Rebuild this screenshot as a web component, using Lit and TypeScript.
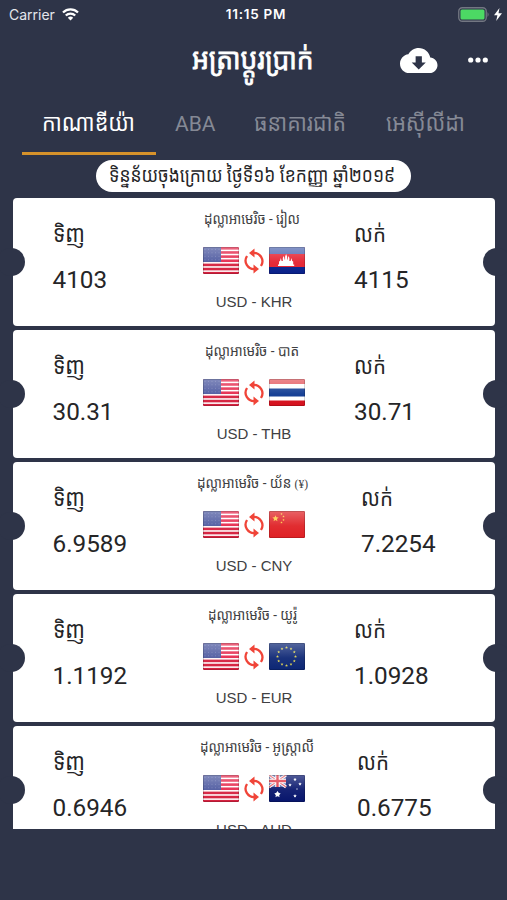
import { LitElement, html, svg, css } from "lit";
import { customElement, property } from "lit/decorators.js";

interface Rate {
  title: string;
  tail?: string;
  titleWidth: number;
  shift: number;
  code: string;
  buy: string;
  sell: string;
  sellX: number;
}

const RATES: Rate[] = [
  { title: "ដុល្លាអាមេរិច - រៀល", titleWidth: 96, shift: -2, code: "KHR", buy: "4103", sell: "4115", sellX: 341 },
  { title: "ដុល្លាអាមេរិច - បាត", titleWidth: 94, shift: -2, code: "THB", buy: "30.31", sell: "30.71", sellX: 341 },
  { title: "ដុល្លាអាមេរិច - យ័ន ", tail: "(¥)", titleWidth: 111, shift: -2, code: "CNY", buy: "6.9589", sell: "7.2254", sellX: 348 },
  { title: "ដុល្លាអាមេរិច - យូរ៉ូ", titleWidth: 89, shift: -2, code: "EUR", buy: "1.1192", sell: "1.0928", sellX: 341 },
  { title: "ដុល្លាអាមេរិច - អូស្ត្រាលី", titleWidth: 114, shift: 3, code: "AUD", buy: "0.6946", sell: "0.6775", sellX: 344 },
];

/** One line of text set to an exact measure. */
@customElement("fit-text")
class FitText extends LitElement {
  @property() text = "";
  @property() tail = "";
  @property({ type: Number }) width = 100;
  @property({ type: Number }) size = 16;
  static styles = css`
    :host { display: block; flex: none; }
    svg { display: block; overflow: visible; }
    text { fill: currentColor; stroke: currentColor; stroke-width: var(--heft, 0); font-family: Roboto, "Khmer OS", "Noto Sans Khmer", "DejaVu Sans", sans-serif; white-space: pre; }
    .tail { font-family: "Liberation Serif", serif; font-size: .85em; }
  `;
  render() {
    return html`<svg width=${this.width} height=${this.size}>
      <text x="0" y=${this.size * 0.8} font-size=${this.size} textLength=${this.width} lengthAdjust="spacingAndGlyphs">${this.tail ? svg`<tspan>${this.text}</tspan><tspan class="tail">${this.tail}</tspan>` : this.text}</text>
    </svg>`;
  }
}

const star = (x: number, y: number, r: number) => {
  const pts = Array.from({ length: 10 }, (_, i) => {
    const q = i % 2 ? r * 0.45 : r;
    const a = (i * Math.PI) / 5 - Math.PI / 2;
    return `${(x + q * Math.cos(a)).toFixed(2)},${(y + q * Math.sin(a)).toFixed(2)}`;
  });
  return svg`<polygon points=${pts.join(" ")} />`;
};

@customElement("country-flag")
class CountryFlag extends LitElement {
  @property() code = "USD";
  static styles = css`
    :host { display: block; width: 36px; height: 27px; }
    svg { display: block; }
  `;
  art() {
    switch (this.code) {
      case "KHR":
        return svg`<rect width="36" height="27" fill="#e5202e"/><rect width="36" height="7" fill="#5168b0"/><rect y="20" width="36" height="7" fill="#08208a"/>
          <path fill="#fff" d="M9 19v-1.5h1v-3l1-.5 .8-3 .8 3h1.2v-3l.8-2 .8 2v1.5h.7v-3l1-2.500 1 2.500v3h.7V11l.8-2 .8 2v3h1.200l.8-3 .8 3 1 .5v3h1V19z"/>`;
      case "THB":
        return svg`<rect width="36" height="27" fill="#fff"/><rect width="36" height="5" fill="#e4555c"/><rect y="9.5" width="36" height="8" fill="#0b3790"/><rect y="21.5" width="36" height="5.5" fill="#d5101d"/>`;
      case "CNY":
        return svg`<rect width="36" height="27" fill="#df2024"/><g fill="#ffc93d">${star(6.5, 7.5, 3.3)}${star(12.5, 3, 1.2)}${star(14.5, 5.5, 1.2)}${star(14.5, 9, 1.2)}${star(12.5, 11.5, 1.2)}</g>`;
      case "EUR":
        return svg`<rect width="36" height="27" fill="#0c2674"/><g fill="#d9cf52">${Array.from({ length: 12 }, (_, i) =>
          star(17.5 + 9 * Math.sin((i * Math.PI) / 6), 13.5 - 9 * Math.cos((i * Math.PI) / 6), 1.5))}</g>`;
      case "AUD":
        return svg`<rect width="36" height="27" fill="#07156c"/><rect width="17" height="12" fill="#596bab"/>
          <path d="M0 0 17 12M17 0 0 12" stroke="#fff" stroke-width="3"/><path d="M0 0 17 12M17 0 0 12" stroke="#e35c68" stroke-width="1.2"/>
          <path d="M8.5 0v12M0 6h17" stroke="#fff" stroke-width="4.5"/><path d="M8.5 0v12M0 6h17" stroke="#df3545" stroke-width="2.4"/>
          <g fill="#fff"><circle cx="8.5" cy="19.3" r="2"/>${star(8.5, 19.3, 3.5)}${star(26, 4.5, 1.8)}${star(21, 10, 1.8)}${star(31, 9, 1.8)}${star(28, 14, 1)}${star(26, 21, 1.9)}</g>`;
      default:
        return svg`<rect width="36" height="27" fill="#fff"/>
          ${[0, 1, 2, 3, 4, 5, 6].map((i) => svg`<rect y=${i * 4.15} width="36" height="2.6" fill=${i < 4 ? "#e5274b" : "#d5213f"}/>`)}
          <rect width="18" height="15" fill="#4c589f"/>
          <g fill="#7882ba">${Array.from({ length: 20 }, (_, i) => svg`<circle cx=${2 + (i % 5) * 3.5} cy=${2.3 + Math.floor(i / 5) * 3.5} r=".5"/>`)}</g>`;
    }
  }
  render() {
    return html`<svg width="36" height="27" viewBox="0 0 36 27">
      <defs>
        <clipPath id="c"><rect width="36" height="27" rx="1"/></clipPath>
        <linearGradient id="g" x2="0" y2="1"><stop stop-color="#fff" stop-opacity=".3"/><stop offset=".55" stop-color="#fff" stop-opacity=".06"/><stop offset="1" stop-color="#fff" stop-opacity="0"/></linearGradient>
      </defs>
      <g clip-path="url(#c)">${this.art()}<rect width="36" height="27" fill="url(#g)"/></g>
      <rect x=".5" y=".5" width="35" height="26" rx="1" fill="none" stroke="#000" stroke-opacity=".16"/>
    </svg>`;
  }
}

@customElement("rate-card")
class RateCard extends LitElement {
  @property({ attribute: false }) rate!: Rate;
  static styles = css`
    :host {
      display: grid; grid-template-columns: 160px 162px 1fr; height: 127.5px; flex: none; position: relative;
      background: #fff; border-radius: 4px; color: #252527; font-family: Roboto, sans-serif;
    }
    .notch { position: absolute; top: 49.5px; width: 28px; height: 28px; border-radius: 50%; background: #2e3448; }
    .l { left: -16px; }
    .r { right: -16px; }
    .side { display: flex; flex-direction: column; padding-top: 25px; gap: 17px; }
    .buy { padding-left: 39.5px; }
    .num { font-size: 24.3px; line-height: 32px; white-space: nowrap; }
    .mid { display: flex; flex-direction: column; align-items: center; padding-top: 13.5px; color: #404042; }
    .flags { display: flex; align-items: center; gap: 5px; margin-top: 20.5px; height: 27px; }
    .pair { font-family: "Liberation Sans", sans-serif; font-size: 15px; line-height: 20px; margin-top: 18px; white-space: nowrap; }
    .swap { display: block; }
  `;
  render() {
    const r = this.rate;
    return html`
      <div class="side buy"><fit-text text="ទិញ" .width=${32} .size=${24}></fit-text><div class="num">${r.buy}</div></div>
      <div class="mid">
        <fit-text style="margin-left:${r.shift * 2}px" .text=${r.title} .tail=${r.tail ?? ""} .width=${r.titleWidth} .size=${15}></fit-text>
        <div class="flags">
          <country-flag code="USD"></country-flag>
          <svg class="swap" width="20" height="26" viewBox="0 0 20 26" fill="none" stroke="#f04438" stroke-width="2.3">
            <path d="M10 4.800C16 5 21 11.500 17 18M10 21.200C4 21-1 14.500 3 8"/>
            <path d="M10.500 .5v9L5 5zM9.500 16.500v9l5.500-4.500z" fill="#f04438" stroke="none"/>
          </svg>
          <country-flag .code=${r.code}></country-flag>
        </div>
        <div class="pair">USD - ${r.code}</div>
      </div>
      <div class="side" style="padding-left:${r.sellX - 322}px"><fit-text text="លក់" .width=${32} .size=${24}></fit-text><div class="num">${r.sell}</div></div>
      <i class="notch l"></i><i class="notch r"></i>`;
  }
}

@customElement("app-root")
class AppRoot extends LitElement {
  static styles = css`
    :host { display: flex; flex-direction: column; width: 507px; height: 900px; overflow: hidden; background: #2e3448; color: #fff; font-family: Roboto, sans-serif; }
    .status { display: grid; grid-template-columns: 1fr auto 1fr; align-items: center; height: 28px; padding: 0 5px 0 9px; box-sizing: border-box; font-family: Inter, sans-serif; font-size: 14px; }
    .carrier { display: flex; align-items: center; gap: 7px; color: #e4e6ec; }
    .time { font-weight: 600; font-size: 13.5px; letter-spacing: .75px; padding-left: 1px; }
    .power { display: flex; justify-content: flex-end; align-items: center; gap: 4px; }
    .head { display: flex; align-items: center; height: 64px; padding-left: 192px; }
    .title { --heft: .8px; }
    .cloud { margin-left: 86.5px; }
    .dots { margin-left: 30px; }
    .tabs { display: flex; height: 63px; padding-left: 22px; color: #858995; }
    .tab { display: flex; align-items: center; box-sizing: border-box; height: 63px; padding-top: 3px; border-bottom: 3px solid transparent; }
    .tab.on { width: 134px; justify-content: center; color: #fff; border-bottom-color: #d6922b; padding-right: 1px; }
    .tab.aba { font-size: 21px; margin-left: 19px; width: 79px; padding-top: 3px; }
    .intl { width: 132px; }
    .note { align-self: center; display: flex; align-items: center; justify-content: center; width: 315px; height: 32px; box-sizing: border-box; padding: 1px 3px 0 0; margin: 4.5px 0 6.5px; border-radius: 16px; background: #fff; color: #252527; flex: none; }
    .list { display: flex; flex-direction: column; gap: 4.5px; height: 631px; overflow: hidden; padding: 0 12px 0 13px; flex: none; }
  `;
  render() {
    return html`
      <div class="status">
        <div class="carrier"><span>Carrier</span>
          <svg width="17" height="13" viewBox="0 0 17 13" fill="none" stroke="#fff" stroke-width="2.3"><path d="M1 4.500a10.800 10.800 0 0 1 15 0M3.800 7.500a6.700 6.700 0 0 1 9.400 0"/><path d="M5.800 9.700a3.900 3.900 0 0 1 5.400 0L8.500 12.600z" fill="#fff" stroke="none"/></svg>
        </div>
        <div class="time">11:15 PM</div>
        <div class="power">
          <svg width="32" height="15" viewBox="0 0 32 15"><rect x=".75" y=".75" width="27.500" height="13.500" rx="3.500" fill="none" stroke="#737782" stroke-width="1.300"/><rect x="2.500" y="2.500" width="24" height="10" rx="1.500" fill="#4cd964"/><path d="M29.500 5q2.200 2.500 0 5z" fill="#737782"/></svg>
          <svg width="8" height="13" viewBox="0 0 8 13"><path d="M5.500 0 0 7.300h3.400L2.200 13 8 5.300H4.500z" fill="#fff"/></svg>
        </div>
      </div>
      <div class="head">
        <fit-text class="title" text="អត្រាប្ដូរប្រាក់" .width=${121.5} .size=${29}></fit-text>
        <svg class="cloud" width="37.5" height="25" viewBox="0 4 24 16"><path fill="#fff" d="M19.350 10.040C18.670 6.590 15.640 4 12 4 9.110 4 6.600 5.640 5.350 8.040 2.340 8.360 0 10.910 0 14c0 3.310 2.690 6 6 6h13c2.760 0 5-2.240 5-5 0-2.640-2.050-4.780-4.650-4.960zM16.500 13.200l-4.500 4.500-4.500-4.500H10V9.200h4v4z"/></svg>
        <svg class="dots" width="20" height="6" viewBox="0 0 20 6" fill="#fff"><circle cx="2.700" cy="3" r="2.600"/><circle cx="10" cy="3" r="2.600"/><circle cx="17.300" cy="3" r="2.600"/></svg>
      </div>
      <div class="tabs">
        <div class="tab on"><fit-text text="កាណាឌីយ៉ា" .width=${93} .size=${24}></fit-text></div>
        <div class="tab aba">ABA</div>
        <div class="tab intl"><fit-text text="ធនាគារជាតិ" .width=${92} .size=${24}></fit-text></div>
        <div class="tab"><fit-text text="អេស៊ីលីដា" .width=${79} .size=${24}></fit-text></div>
      </div>
      <div class="note"><fit-text text="ទិន្នន័យចុងក្រោយ ថ្ងៃទី១៦ ខែកញ្ញា ឆ្នាំ២០១៩" .width=${286} .size=${20}></fit-text></div>
      <div class="list">${RATES.map((r) => html`<rate-card .rate=${r}></rate-card>`)}</div>`;
  }
}
